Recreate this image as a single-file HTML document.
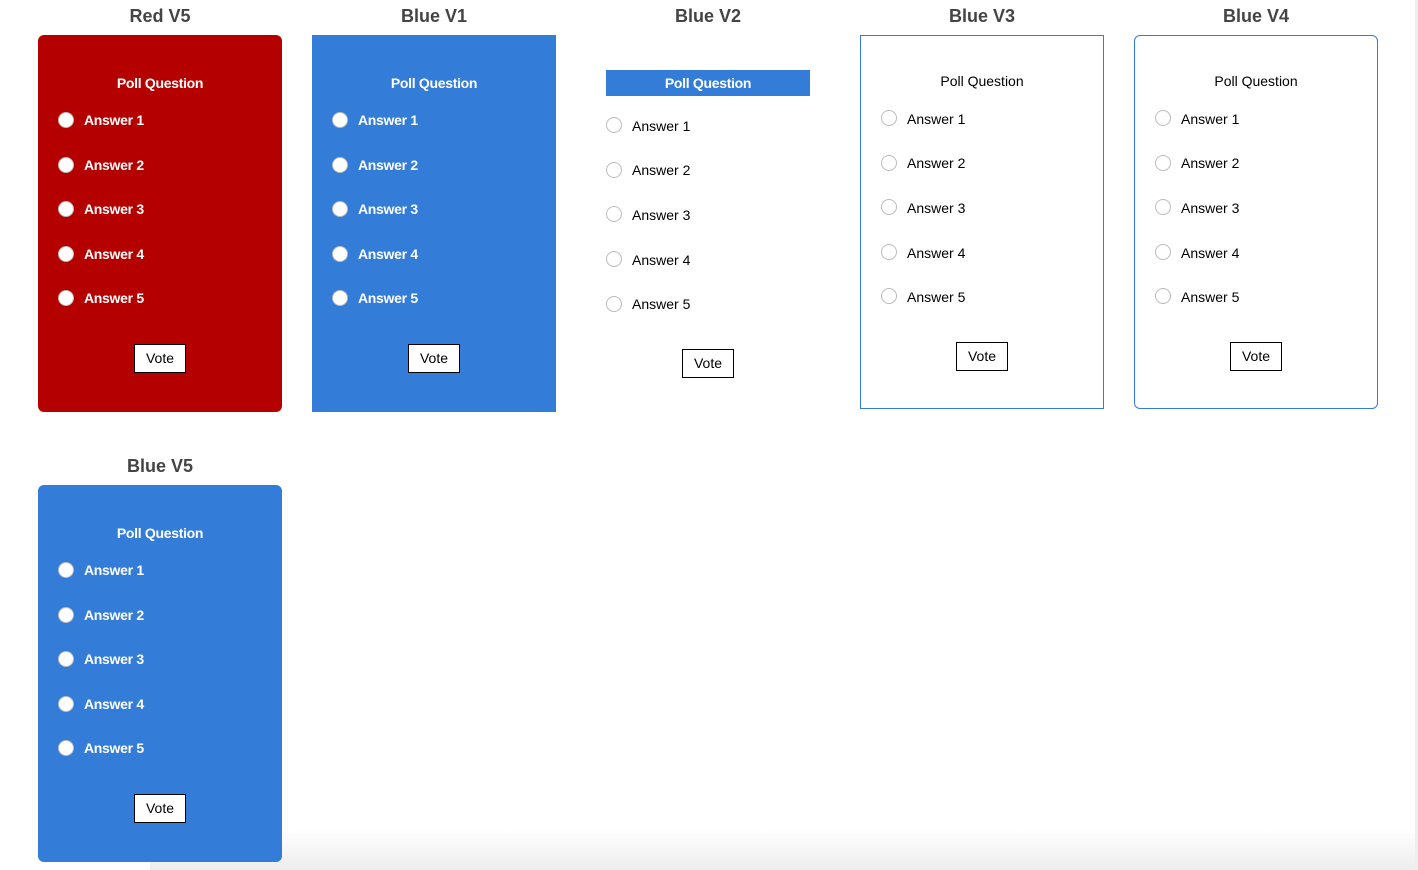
<!DOCTYPE html>
<html><head><meta charset="utf-8"><style>
*{margin:0;padding:0;box-sizing:border-box}
body{width:1418px;height:870px;background:#fff;position:relative;overflow:hidden;font-family:"Liberation Sans",Arial,sans-serif}
.a{position:absolute}
.t{position:absolute;width:244px;text-align:center;font-size:18px;font-weight:bold;color:#444;line-height:20px}
.card{position:absolute;width:244px;height:377px;z-index:2}
.q{position:absolute;left:0;width:100%;text-align:center;font-size:14px;line-height:16px}
.r{position:absolute;width:16px;height:16px;border-radius:50%;background:#fff;border:1px solid #bbb}
.l{position:absolute;font-size:14px;line-height:16px}
.v{position:absolute;width:52px;height:29px;background:#fff;border:1px solid #000;font-size:14px;line-height:27px;text-align:center;color:#000}
.w{color:#fff;font-weight:bold;letter-spacing:-0.3px}
.k{color:#000}
</style></head><body>
<div class="a" style="left:1415px;top:0;width:3px;height:870px;background:#eee"></div>
<div class="a" style="left:150px;top:830px;width:1265px;height:40px;background:linear-gradient(#fff,#ededed);z-index:0"></div>

<div class="t" style="left:38px;top:6px">Red V5</div>
<div class="card" style="left:38px;top:35px;background:#b50000;border-radius:6px">
<div class="q w" style="top:40px">Poll Question</div>
<div class="r" style="left:20px;top:77px"></div><div class="l w" style="left:46px;top:77px">Answer 1</div>
<div class="r" style="left:20px;top:122px"></div><div class="l w" style="left:46px;top:122px">Answer 2</div>
<div class="r" style="left:20px;top:166px"></div><div class="l w" style="left:46px;top:166px">Answer 3</div>
<div class="r" style="left:20px;top:211px"></div><div class="l w" style="left:46px;top:211px">Answer 4</div>
<div class="r" style="left:20px;top:255px"></div><div class="l w" style="left:46px;top:255px">Answer 5</div>
<div class="v" style="left:96px;top:309px">Vote</div>
</div>

<div class="t" style="left:312px;top:6px">Blue V1</div>
<div class="card" style="left:312px;top:35px;background:#337cd8">
<div class="q w" style="top:40px">Poll Question</div>
<div class="r" style="left:20px;top:77px"></div><div class="l w" style="left:46px;top:77px">Answer 1</div>
<div class="r" style="left:20px;top:122px"></div><div class="l w" style="left:46px;top:122px">Answer 2</div>
<div class="r" style="left:20px;top:166px"></div><div class="l w" style="left:46px;top:166px">Answer 3</div>
<div class="r" style="left:20px;top:211px"></div><div class="l w" style="left:46px;top:211px">Answer 4</div>
<div class="r" style="left:20px;top:255px"></div><div class="l w" style="left:46px;top:255px">Answer 5</div>
<div class="v" style="left:96px;top:309px">Vote</div>
</div>

<div class="t" style="left:586px;top:6px">Blue V2</div>
<div class="card" style="left:586px;top:35px">
<div class="q w" style="left:20px;width:204px;top:35px;height:26px;line-height:26px;background:#337cd8">Poll Question</div>
<div class="r" style="left:20px;top:82px"></div><div class="l k" style="left:46px;top:83px">Answer 1</div>
<div class="r" style="left:20px;top:127px"></div><div class="l k" style="left:46px;top:127px">Answer 2</div>
<div class="r" style="left:20px;top:171px"></div><div class="l k" style="left:46px;top:172px">Answer 3</div>
<div class="r" style="left:20px;top:216px"></div><div class="l k" style="left:46px;top:217px">Answer 4</div>
<div class="r" style="left:20px;top:261px"></div><div class="l k" style="left:46px;top:261px">Answer 5</div>
<div class="v" style="left:96px;top:314px">Vote</div>
</div>

<div class="t" style="left:860px;top:6px">Blue V3</div>
<div class="card" style="left:860px;top:35px;height:374px;border:1px solid #337cd8">
<div class="q k" style="top:37px">Poll Question</div>
<div class="r" style="left:20px;top:74px"></div><div class="l k" style="left:46px;top:75px">Answer 1</div>
<div class="r" style="left:20px;top:119px"></div><div class="l k" style="left:46px;top:119px">Answer 2</div>
<div class="r" style="left:20px;top:163px"></div><div class="l k" style="left:46px;top:164px">Answer 3</div>
<div class="r" style="left:20px;top:208px"></div><div class="l k" style="left:46px;top:209px">Answer 4</div>
<div class="r" style="left:20px;top:252px"></div><div class="l k" style="left:46px;top:253px">Answer 5</div>
<div class="v" style="left:95px;top:306px">Vote</div>
</div>

<div class="t" style="left:1134px;top:6px">Blue V4</div>
<div class="card" style="left:1134px;top:35px;height:374px;border:1px solid #337cd8;border-radius:6px">
<div class="q k" style="top:37px">Poll Question</div>
<div class="r" style="left:20px;top:74px"></div><div class="l k" style="left:46px;top:75px">Answer 1</div>
<div class="r" style="left:20px;top:119px"></div><div class="l k" style="left:46px;top:119px">Answer 2</div>
<div class="r" style="left:20px;top:163px"></div><div class="l k" style="left:46px;top:164px">Answer 3</div>
<div class="r" style="left:20px;top:208px"></div><div class="l k" style="left:46px;top:209px">Answer 4</div>
<div class="r" style="left:20px;top:252px"></div><div class="l k" style="left:46px;top:253px">Answer 5</div>
<div class="v" style="left:95px;top:306px">Vote</div>
</div>

<div class="t" style="left:38px;top:456px">Blue V5</div>
<div class="card" style="left:38px;top:485px;background:#337cd8;border-radius:6px">
<div class="q w" style="top:40px">Poll Question</div>
<div class="r" style="left:20px;top:77px"></div><div class="l w" style="left:46px;top:77px">Answer 1</div>
<div class="r" style="left:20px;top:122px"></div><div class="l w" style="left:46px;top:122px">Answer 2</div>
<div class="r" style="left:20px;top:166px"></div><div class="l w" style="left:46px;top:166px">Answer 3</div>
<div class="r" style="left:20px;top:211px"></div><div class="l w" style="left:46px;top:211px">Answer 4</div>
<div class="r" style="left:20px;top:255px"></div><div class="l w" style="left:46px;top:255px">Answer 5</div>
<div class="v" style="left:96px;top:309px">Vote</div>
</div>
</body></html>
